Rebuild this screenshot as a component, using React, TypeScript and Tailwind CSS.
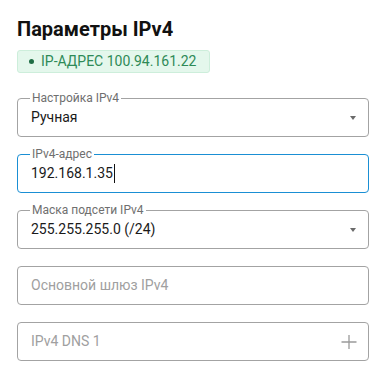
interface FieldProps {
  label?: string
  value?: string
  placeholder?: string
  focused?: boolean
  select?: boolean
  add?: boolean
}

function Field({ label, value, placeholder, focused, select, add }: Readonly<FieldProps>) {
  return (
    <div
      className={`relative flex h-[39px] items-center rounded-[4px] border pl-[13px] pr-[10px] ${
        focused ? "border-[#1a8fd4]" : "border-[#a3a3a3]"
      }`}
    >
      {label && (
        <span className="absolute -top-[9px] left-[12px] bg-white px-[2px] text-[12px] leading-[16px] text-[#6f6f6f]">
          {label}
        </span>
      )}
      <div className="flex flex-1 items-center text-[14px]">
        {value ? (
          <span className="text-[#1a1a1a]">{value}</span>
        ) : (
          <span className="text-[#a0a0a0]">{placeholder}</span>
        )}
        {focused && <span className="ml-[1px] h-[19px] w-px bg-[#111]" />}
      </div>
      {select && (
        <span className="mr-[2px] h-0 w-0 border-x-[3.5px] border-t-[4px] border-x-transparent border-t-[#6a6a6a]" />
      )}
      {add && (
        <svg width="16" height="16" viewBox="0 0 16 16" className="mr-[1px] text-[#9a9a9a]">
          <path d="M8 1v14M0.5 8h15" stroke="currentColor" strokeWidth="1.3" fill="none" />
        </svg>
      )}
    </div>
  )
}

export default function App() {
  return (
    <div className="h-[380px] w-[388px] bg-white pl-[17px] pr-[19px] pt-[15px] font-['Roboto',sans-serif]">
      <h1 className="text-[20px] font-bold leading-[28px] text-[#111]">Параметры IPv4</h1>

      <div className="mt-[7px] flex h-[23px] w-fit items-center gap-[7px] rounded-[3px] border border-[#cdeedb] bg-[#e4f7ec] pl-[11px] pr-[13px] text-[14px] text-[#2e8a57]">
        <span className="h-[5px] w-[5px] rounded-full bg-[#1f6d45]" />
        <span>IP-АДРЕС 100.94.161.22</span>
      </div>

      <div className="mt-[25px] flex flex-col gap-[17px]">
        <Field label="Настройка IPv4" value="Ручная" select />
        <Field label="IPv4-адрес" value="192.168.1.35" focused />
        <Field label="Маска подсети IPv4" value="255.255.255.0 (/24)" select />
        <Field placeholder="Основной шлюз IPv4" />
        <Field placeholder="IPv4 DNS 1" add />
      </div>
    </div>
  )
}
